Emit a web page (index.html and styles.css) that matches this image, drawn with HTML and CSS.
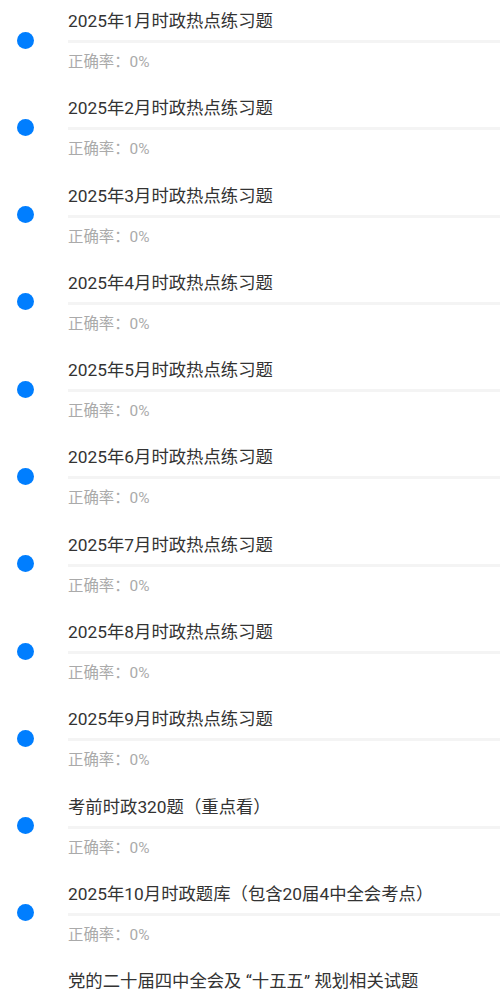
FILE: index.html
```html
<!DOCTYPE html>
<html lang="zh-CN">
<head>
    <meta charset="UTF-8">
    <meta name="viewport" content="width=device-width, initial-scale=1.0">
    <title>练习题</title>
    <link rel="stylesheet" href="styles.css">
</head>
<body>
    <div class="list">
        <div class="item"><div class="dot-col"><span class="dot"></span></div><div class="body"><div class="title">2025年1月时政热点练习题</div><div class="bar"></div><div class="rate">正确率：0%</div></div></div>
        <div class="item"><div class="dot-col"><span class="dot"></span></div><div class="body"><div class="title">2025年2月时政热点练习题</div><div class="bar"></div><div class="rate">正确率：0%</div></div></div>
        <div class="item"><div class="dot-col"><span class="dot"></span></div><div class="body"><div class="title">2025年3月时政热点练习题</div><div class="bar"></div><div class="rate">正确率：0%</div></div></div>
        <div class="item"><div class="dot-col"><span class="dot"></span></div><div class="body"><div class="title">2025年4月时政热点练习题</div><div class="bar"></div><div class="rate">正确率：0%</div></div></div>
        <div class="item"><div class="dot-col"><span class="dot"></span></div><div class="body"><div class="title">2025年5月时政热点练习题</div><div class="bar"></div><div class="rate">正确率：0%</div></div></div>
        <div class="item"><div class="dot-col"><span class="dot"></span></div><div class="body"><div class="title">2025年6月时政热点练习题</div><div class="bar"></div><div class="rate">正确率：0%</div></div></div>
        <div class="item"><div class="dot-col"><span class="dot"></span></div><div class="body"><div class="title">2025年7月时政热点练习题</div><div class="bar"></div><div class="rate">正确率：0%</div></div></div>
        <div class="item"><div class="dot-col"><span class="dot"></span></div><div class="body"><div class="title">2025年8月时政热点练习题</div><div class="bar"></div><div class="rate">正确率：0%</div></div></div>
        <div class="item"><div class="dot-col"><span class="dot"></span></div><div class="body"><div class="title">2025年9月时政热点练习题</div><div class="bar"></div><div class="rate">正确率：0%</div></div></div>
        <div class="item"><div class="dot-col"><span class="dot"></span></div><div class="body"><div class="title">考前时政320题（重点看）</div><div class="bar"></div><div class="rate">正确率：0%</div></div></div>
        <div class="item"><div class="dot-col"><span class="dot"></span></div><div class="body"><div class="title">2025年10月时政题库（包含20届4中全会考点）</div><div class="bar"></div><div class="rate">正确率：0%</div></div></div>
        <div class="item"><div class="dot-col"><span class="dot"></span></div><div class="body"><div class="title">党的二十届四中全会及 “十五五” 规划相关试题</div><div class="bar"></div><div class="rate">正确率：0%</div></div></div>
    </div>
</body>
</html>
```

FILE: styles.css
```css
body {
    margin: 0;
    background-color: white;
    font-family: Roboto, "Noto Sans CJK SC", sans-serif;
    overflow: hidden;
}

.list {
    display: flex;
    flex-direction: column;
}

.item {
    display: flex;
    height: 87.3px;
    flex-shrink: 0;
    box-sizing: border-box;
    padding-top: 9px;
}

.dot-col {
    width: 68px;
    flex-shrink: 0;
    padding-top: 22.5px;
    padding-left: 17px;
    box-sizing: border-box;
}

.dot {
    display: block;
    width: 17px;
    height: 17px;
    border-radius: 50%;
    background-color: #007eff;
}

.body {
    flex: 1;
}

.title {
    font-size: 17.35px;
    line-height: 24px;
    color: #333;
    white-space: nowrap;
}

.bar {
    height: 3px;
    margin-top: 7px;
    background-color: #f4f4f4;
}

.rate {
    margin-top: 9px;
    font-size: 15.4px;
    line-height: 20px;
    color: #aaa;
}
```
